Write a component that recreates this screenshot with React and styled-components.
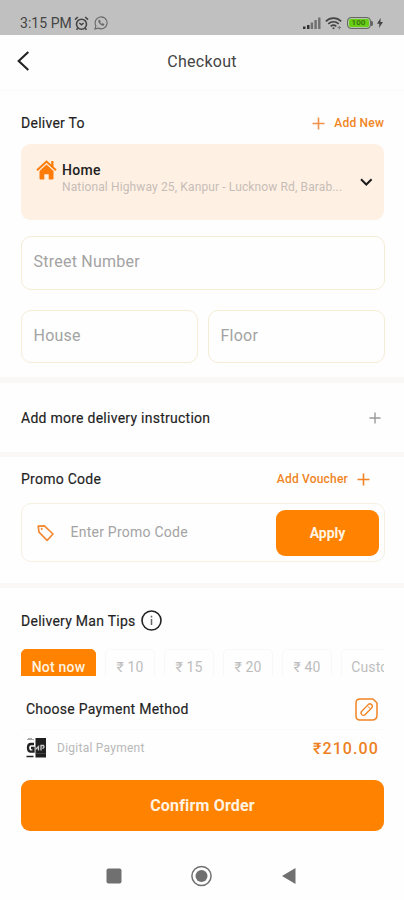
import React from "react";
import styled, { createGlobalStyle } from "styled-components";

const GlobalStyle = createGlobalStyle`
  * {
    box-sizing: border-box;
  }
  body {
    margin: 0;
    background: #fefefe;
    font-family: Roboto, "Noto Sans", sans-serif;
    color: #2b2b2b;
  }
  svg {
    display: block;
    flex: none;
  }
  button {
    font: inherit;
    border: 0;
    padding: 0;
    background: none;
  }
`;

const Screen = styled.div`
  width: 404px;
  height: 900px;
  display: flex;
  flex-direction: column;
  overflow: hidden;
`;

const StatusBar = styled.div`
  height: 35px;
  flex: none;
  background: #c0c0c0;
  padding: 11px 21px 0 20px;
  display: flex;
  justify-content: space-between;
  align-items: center;
  color: #444;
`;

const StatusGroup = styled.div`
  display: flex;
  align-items: center;
  gap: ${(p) => p.$gap};
`;

const Clock = styled.span`
  font-size: 14px;
  letter-spacing: 0.05px;
  margin-right: -3px;
`;

const Header = styled.header`
  height: 56px;
  flex: none;
  display: grid;
  grid-template-columns: 40px 1fr 40px;
  align-items: center;
  padding: 0 16px;
  border-bottom: 2px solid #fbfbfa;
  h1 {
    margin: -2px 0 0;
    text-align: center;
    font-size: 16px;
    font-weight: 400;
    letter-spacing: 0.25px;
    color: #444;
  }
  svg {
    margin-top: -2px;
  }
`;

const Content = styled.main`
  height: 585px;
  flex: none;
  overflow: hidden;
`;

const Section = styled.section`
  height: ${(p) => p.$height};
  padding: ${(p) => p.$pad || "0"} 19px 0 21px;
`;

const Band = styled.div`
  height: ${(p) => p.$size};
  background: #f9f8f6;
`;

const Row = styled.div`
  display: flex;
  align-items: center;
  justify-content: space-between;
  height: ${(p) => p.$height};
  padding-right: ${(p) => p.$right || "0"};
`;

const SectionTitle = styled.h2`
  margin: 0;
  font-size: 14px;
  line-height: 18px;
  font-weight: 400;
  letter-spacing: 0.26px;
  color: #222;
  -webkit-text-stroke: 0.15px #222;
`;

const LinkButton = styled.button`
  display: flex;
  align-items: center;
  gap: 9px;
  font-size: 12px;
  font-weight: 500;
  letter-spacing: 0.2px;
  color: #ef8524;
`;

const AddressCard = styled.div`
  height: 76px;
  width: 363px;
  margin-top: 12px;
  padding: 16px 11px 0 15px;
  border-radius: 9px;
  background: #fff0e4;
  display: grid;
  grid-template-columns: 21px 1fr 14px;
  column-gap: 5px;
`;

const AddressText = styled.div`
  strong {
    display: block;
    font-size: 14px;
    line-height: 20px;
    font-weight: 500;
    letter-spacing: 0.3px;
    color: #222;
  }
  span {
    display: block;
    font-size: 12px;
    line-height: 15px;
    letter-spacing: 0.13px;
    white-space: nowrap;
    color: #c6bdb6;
  }
`;

const CardChevron = styled.div`
  padding-top: 17px;
`;

const Field = styled.div`
  height: ${(p) => p.$height};
  border: 1px solid #f5ecd6;
  border-radius: 10px;
  padding: 0 12px 3px;
  display: flex;
  align-items: center;
  font-size: 16px;
  letter-spacing: 0.24px;
  color: #a3a3a3;
`;

const Fields = styled.div`
  width: 364px;
  margin-top: 16px;
  margin-left: -0.5px;
  display: grid;
  grid-template-columns: 1fr 1fr;
  gap: 20px 10px;
  & > :first-child {
    grid-column: 1 / -1;
  }
`;

const PromoBox = styled.div`
  height: 59px;
  margin-top: 13px;
  border: 1px solid #f7f0e2;
  border-radius: 10px;
  padding: 0 5px 0 15px;
  display: flex;
  align-items: center;
`;

const PromoHint = styled.span`
  flex: 1;
  margin: -2px 0 0 15.5px;
  font-size: 14px;
  letter-spacing: 0.24px;
  color: #a3a3a3;
`;

const ApplyButton = styled.button`
  width: 103px;
  height: 46px;
  border-radius: 9px;
  background: #ff8200;
  color: #fff3e2;
  font-size: 14px;
  font-weight: 700;
`;

const TipsTitle = styled.div`
  display: flex;
  align-items: center;
  gap: 5px;
  height: 22px;
  svg {
    margin-top: -1px;
  }
`;

const Tips = styled.div`
  display: flex;
  gap: 9px;
  width: 363px;
  margin-top: 17px;
  overflow: hidden;
`;

const Tip = styled.div`
  flex: none;
  width: ${(p) => p.$width || "50px"};
  height: 36px;
  border-radius: 5px;
  border: 1px solid ${(p) => (p.$active ? "#ff8200" : "#f8f8f7")};
  background: ${(p) => (p.$active ? "#ff8200" : "transparent")};
  color: ${(p) => (p.$active ? "#fff3e2" : "#bdbdbd")};
  font-size: 14px;
  font-weight: ${(p) => (p.$active ? 500 : 400)};
  letter-spacing: ${(p) => (p.$active ? "0.2px" : "0.1px")};
  line-height: 34px;
  text-align: center;
`;

const PaymentSheet = styled.footer`
  height: 176px;
  flex: none;
  padding: 13px 20px 0 21px;
`;

const PaymentRow = styled.div`
  display: flex;
  align-items: center;
  justify-content: space-between;
  height: ${(p) => p.$height};
  padding: 0 ${(p) => p.$right || "5px"} 0 5px;
  border-bottom: 1px solid ${(p) => (p.$line ? "#fbfaf9" : "transparent")};
`;

const Method = styled.div`
  display: flex;
  align-items: center;
  gap: 10px;
  font-size: 12px;
  letter-spacing: 0.25px;
  color: #b8b8b8;
`;

const Total = styled.span`
  font-size: 16px;
  font-weight: 500;
  letter-spacing: 1.1px;
  color: #ed8122;
`;

const ConfirmButton = styled.button`
  display: block;
  width: 100%;
  height: 51px;
  margin-top: 13px;
  border-radius: 9px;
  background: #ff8200;
  color: #fff3e2;
  font-size: 16px;
  font-weight: 700;
  letter-spacing: 0.18px;
`;

const NavBar = styled.nav`
  flex: 1;
  display: flex;
  justify-content: space-between;
  align-items: center;
  padding: 0 107px 0 106px;
`;

const Plus = ({ size = 13, color = "#f28322", weight = 1.6 }) => (
  <svg width={size} height={size} viewBox="0 0 13 13">
    <path d="M6.5 0.5v12M0.5 6.5h12" stroke={color} strokeWidth={weight} />
  </svg>
);

const AlarmIcon = () => (
  <svg width="15" height="15" viewBox="0 0 15 15" fill="none" stroke="#444" strokeWidth="1.6">
    <circle cx="7.5" cy="8.2" r="5" />
    <path d="M1 3.6 3.8 1M14 3.6 11.2 1M5.3 7l2.2 1.8L9.6 7M3.8 12.2l-1.3 1.6M11.2 12.2l1.3 1.6" />
  </svg>
);

const WhatsappIcon = () => (
  <svg width="14" height="14" viewBox="0 0 14 14" fill="none" stroke="#666" strokeWidth="1.1">
    <path d="M1 13l.9-3.2A6 6 0 1 1 4.2 12.1z" />
    <path
      d="M4.6 4.2c-.5 2.6 2.5 5.6 5 5.3l.6-1.3-1.6-.9-.8.7c-.9-.4-1.5-1-1.9-1.9l.6-.7-.7-1.5z"
      fill="#666"
      strokeWidth=".3"
    />
  </svg>
);

const SignalIcon = () => (
  <svg width="18" height="12" viewBox="0 0 18 12">
    <path d="M0 9.5h2.5V12H0zM4 8h2.5v4H4z" fill="#333" />
    <path d="M7.7 5.5h2.4V12H7.7zM11.4 3h2.4v9h-2.4zM15.1.5h2.4V12h-2.4z" fill="#707070" />
  </svg>
);

const WifiIcon = () => (
  <svg width="17" height="13" viewBox="0 0 17 13" fill="none" stroke="#444" strokeWidth="1.6">
    <path d="M.8 4.3c4.5-4.2 10.9-4.2 15.4 0M3.3 6.9c3-2.8 7.4-2.8 10.4 0M5.7 9.4c1.7-1.5 3.9-1.5 5.6 0" />
    <circle cx="8.5" cy="11.3" r="1" fill="#444" stroke="none" />
    <path d="M12.5 10.5h3.5M14.3 9v3.5" stroke="#777" strokeWidth="1" />
  </svg>
);

const BatteryLevel = styled.div`
  width: 24px;
  height: 12px;
  border: 1px solid #666;
  border-radius: 4px;
  background: #69cf16;
  box-shadow: inset 0 0 0 1px #b5c3a9;
  font-size: 8px;
  font-weight: 700;
  line-height: 10px;
  text-align: center;
  color: #39760f;
`;

const BatteryIcon = () => (
  <StatusGroup $gap="0">
    <BatteryLevel>100</BatteryLevel>
    <svg width="2" height="5" viewBox="0 0 2 5">
      <path d="M0 0h1l1 1v3L1 5H0z" fill="#666" />
    </svg>
  </StatusGroup>
);

const BoltIcon = () => (
  <svg width="6" height="10" viewBox="0 0 6 10">
    <path d="M3.6 0 0 5.7h2.4L2 10l4-5.9H3.5z" fill="#444" />
  </svg>
);

const BackIcon = () => (
  <svg width="14" height="20" viewBox="0 0 14 20" fill="none" stroke="#222" strokeWidth="2.1">
    <path d="M12.3 1 2.7 10l9.6 9" />
  </svg>
);

const HomeIcon = () => (
  <svg width="21" height="20" viewBox="0 0 21 20">
    <path d="M1 10.2 10.5 1.5 20 10.2" fill="none" stroke="#ff7c0a" strokeWidth="2" />
    <path d="M15.2 1h2.3v6l-2.3-2.1z" fill="#ff7c0a" />
    <path
      d="M3.5 10.9 10.5 4.6l7 6.3v7.6q0 1-1 1h-3.8v-5.2H8.3v5.2H4.5q-1 0-1-1z"
      fill="#ff7c0a"
    />
  </svg>
);

const ChevronIcon = () => (
  <svg width="14" height="10" viewBox="0 0 14 10" fill="none" stroke="#1c1c1c" strokeWidth="2">
    <path d="M2 2.3 7.3 7.5l5.3-5.2" />
  </svg>
);

const TagIcon = () => (
  <svg width="18" height="18" viewBox="0 0 18 18" fill="none" stroke="#f28a35" strokeWidth="1.7" strokeLinejoin="round">
    <path d="M1.2 2.2 7.4 1.8 16 10 10.1 16.3 2 8.2z" />
    <circle cx="4.7" cy="4.9" r=".8" fill="#f28a35" strokeWidth=".6" />
  </svg>
);

const InfoIcon = () => (
  <svg width="21" height="21" viewBox="0 0 21 21" fill="none" stroke="#222" strokeWidth="1.6">
    <circle cx="10.5" cy="10.5" r="9.5" />
    <path d="M10.5 9v6M10.5 5.7v1.7" stroke="#666" strokeWidth="1.5" />
  </svg>
);

// pencil is a tilted capsule with a cap line near the tip
const EditIcon = () => (
  <svg width="23" height="23" viewBox="0 0 23 23" fill="none" stroke="#f28322" strokeWidth="1.5">
    <path d="M5 1h13l4 4v12q0 5-5 5H5q-4 0-4-4V5q0-4 4-4z" strokeLinejoin="round" />
    <rect x="4.7" y="9.2" width="14" height="4.8" rx="2.4" transform="rotate(-46 11.7 11.6)" strokeWidth="1.3" />
    <path d="M12.8 8.200l2.500 2.600" strokeWidth="1" />
  </svg>
);

const DigitalIcon = () => (
  <svg width="21" height="20" viewBox="0 0 21 20">
    <path d="M9.5 0H20v19.5H9.5z" fill="#202020" />
    <path d="M1 1.5h7M2 .5h4" stroke="#aaa" strokeWidth="1" />
    <path d="M.5 18.5h7" stroke="#222" strokeWidth="1.5" />
    <path d="M8 6H4.8Q2 6 2 9.8t2.8 3.9h2.7V10H5" fill="none" stroke="#222" strokeWidth="2.3" />
    <path d="M9.5 11.500l3-3v4M15 12.500V7.500h2.500q1.500 2-1.200 3" fill="none" stroke="#ccc" strokeWidth="1.300" />
    <path d="M9.5 15.5h10" stroke="#555" strokeWidth=".7" />
  </svg>
);

const RecentsIcon = () => (
  <svg width="16" height="16" viewBox="0 0 16 16">
    <rect x=".5" y=".5" width="15" height="15" rx="2" fill="#707070" />
  </svg>
);

const CircleIcon = () => (
  <svg width="22" height="22" viewBox="0 0 22 22">
    <circle cx="10.5" cy="11" r="9.6" fill="none" stroke="#707070" strokeWidth="1.5" />
    <circle cx="10.5" cy="11" r="6" fill="#707070" />
  </svg>
);

const TriangleIcon = () => (
  <svg width="16" height="18" viewBox="0 0 16 18">
    <path d="M1 9 14.5 1v16z" fill="#707070" />
  </svg>
);

const tips = ["₹ 10", "₹ 15", "₹ 20", "₹ 40"];

const App = () => {
  return (
    <>
      <GlobalStyle />
      <Screen>
        <StatusBar>
          <StatusGroup $gap="5px">
            <Clock>3:15 PM</Clock>
            <AlarmIcon />
            <WhatsappIcon />
          </StatusGroup>
          <StatusGroup $gap="4.5px">
            <SignalIcon />
            <WifiIcon />
            <BatteryIcon />
            <BoltIcon />
          </StatusGroup>
        </StatusBar>

        <Header>
          <BackIcon />
          <h1>Checkout</h1>
        </Header>

        <Content>
          <Section $height="286px" $pad="23px">
            <Row $height="18px" $right="1px">
              <SectionTitle>Deliver To</SectionTitle>
              <LinkButton>
                <Plus color="#f0924a" />
                Add New
              </LinkButton>
            </Row>
            <AddressCard>
              <HomeIcon />
              <AddressText>
                <strong>Home</strong>
                <span>National Highway 25, Kanpur - Lucknow Rd, Barab...</span>
              </AddressText>
              <CardChevron>
                <ChevronIcon />
              </CardChevron>
            </AddressCard>
            <Fields>
              <Field $height="54px">Street Number</Field>
              <Field $height="53px">House</Field>
              <Field $height="53px">Floor</Field>
            </Fields>
          </Section>

          <Band $size="6px" />
          <Section $height="69px">
            <Row $height="70px" $right="4px">
              <SectionTitle>Add more delivery instruction</SectionTitle>
              <Plus size={12} color="#999" weight={1.5} />
            </Row>
          </Section>

          <Band $size="5px" />
          <Section $height="126px" $pad="11px">
            <Row $height="22px" $right="15px">
              <SectionTitle>Promo Code</SectionTitle>
              <LinkButton>
                Add Voucher
                <Plus />
              </LinkButton>
            </Row>
            <PromoBox>
              <TagIcon />
              <PromoHint>Enter Promo Code</PromoHint>
              <ApplyButton>Apply</ApplyButton>
            </PromoBox>
          </Section>

          <Band $size="5px" />
          <Section $height="88px" $pad="22px">
            <TipsTitle>
              <SectionTitle>Delivery Man Tips</SectionTitle>
              <InfoIcon />
            </TipsTitle>
            <Tips>
              <Tip $active $width="75px">
                Not now
              </Tip>
              {tips.map((tip) => (
                <Tip key={tip}>{tip}</Tip>
              ))}
              <Tip $width="70px">Custom</Tip>
            </Tips>
          </Section>
        </Content>

        <PaymentSheet>
          <PaymentRow $height="41px" $right="6px" $line>
            <SectionTitle>Choose Payment Method</SectionTitle>
            <EditIcon />
          </PaymentRow>
          <PaymentRow $height="37px">
            <Method>
              <DigitalIcon />
              Digital Payment
            </Method>
            <Total>₹210.00</Total>
          </PaymentRow>
          <ConfirmButton>Confirm Order</ConfirmButton>
        </PaymentSheet>

        <NavBar>
          <RecentsIcon />
          <CircleIcon />
          <TriangleIcon />
        </NavBar>
      </Screen>
    </>
  );
};

export default App;
